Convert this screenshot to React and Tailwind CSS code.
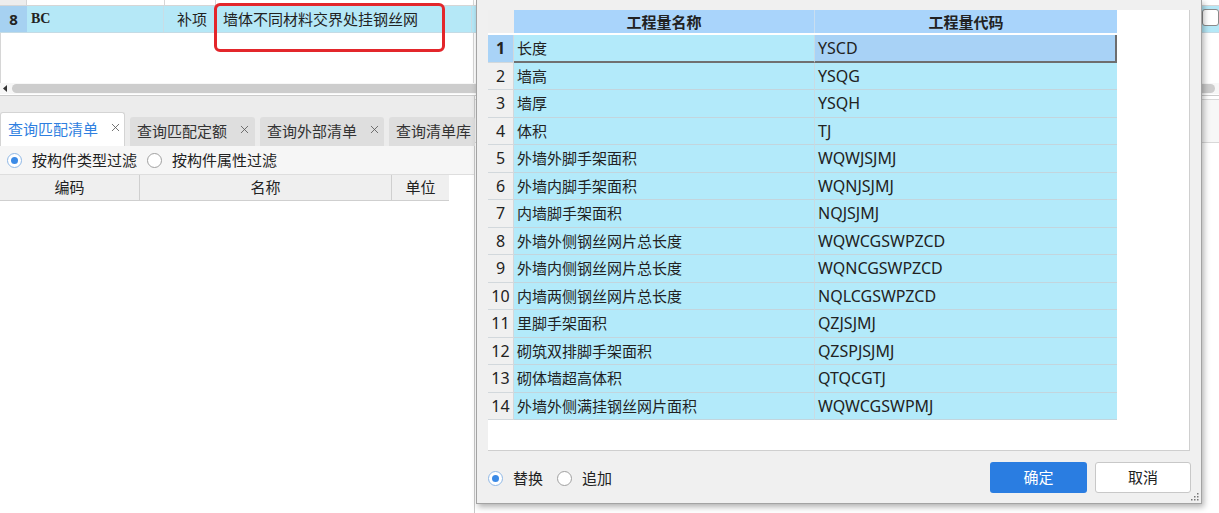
import { X } from 'lucide-react';

const rows = [
  ['长度', 'YSCD'],
  ['墙高', 'YSQG'],
  ['墙厚', 'YSQH'],
  ['体积', 'TJ'],
  ['外墙外脚手架面积', 'WQWJSJMJ'],
  ['外墙内脚手架面积', 'WQNJSJMJ'],
  ['内墙脚手架面积', 'NQJSJMJ'],
  ['外墙外侧钢丝网片总长度', 'WQWCGSWPZCD'],
  ['外墙内侧钢丝网片总长度', 'WQNCGSWPZCD'],
  ['内墙两侧钢丝网片总长度', 'NQLCGSWPZCD'],
  ['里脚手架面积', 'QZJSJMJ'],
  ['砌筑双排脚手架面积', 'QZSPJSJMJ'],
  ['砌体墙超高体积', 'QTQCGTJ'],
  ['外墙外侧满挂钢丝网片面积', 'WQWCGSWPMJ'],
];

const Radio = ({ checked, label }) => (
  <label className="flex items-center gap-[10px]">
    <span
      className={`w-[15px] h-[15px] rounded-full bg-white flex items-center justify-center border ${
        checked ? 'border-[#8fb8e6]' : 'border-[#a0a0a0]'
      }`}
    >
      {checked && <span className="w-[7px] h-[7px] rounded-full bg-[#3b8ae6]" />}
    </span>
    <span>{label}</span>
  </label>
);

const Tab = ({ label, active, closable = true, width }) => (
  <div
    className={`flex items-center gap-[11px] px-[7px] rounded-t-[3px] ${width} ${
      active
        ? 'h-[34px] bg-white text-[#2f7fe0] border border-b-0 border-[#d4d4d4]'
        : 'h-[29px] bg-[#dedede] text-[#333]'
    }`}
  >
    <span className="whitespace-nowrap">{label}</span>
    {closable && <X size={13} strokeWidth={1.5} className="text-[#555] shrink-0 -mt-[4px]" />}
  </div>
);

export default function App() {
  return (
    <div className="relative w-[1219px] h-[513px] overflow-hidden bg-white text-[15px] text-[#222] font-['Noto_Sans','Noto_Sans_CJK_SC',sans-serif]">
      <div className="flex flex-col h-full">
        {/* upper grid */}
        <div className="h-[96px] flex flex-col border-b border-[#cccccc]">
          <div className="h-[6px] flex border-b border-[#d6d6d6]">
            <div className="w-[27px] bg-[#ededed] border-r border-[#d6d6d6]" />
            <div className="w-[138px] border-r border-[#d6d6d6]" />
            <div className="w-[51px] border-r border-[#d6d6d6]" />
            <div className="w-[258px] border-r border-[#d6d6d6]" />
            <div className="flex-1" />
          </div>
          <div className="h-[27px] flex bg-[#b5e8f7] border-b border-[#c4dbe5] leading-[26px]">
            <div className="w-[27px] bg-[#a6d1f1] text-center font-bold">8</div>
            <div className="w-[138px] border-r border-[#c9dde6] pl-[4px] font-['Liberation_Serif',serif] text-[14px] font-semibold">BC</div>
            <div className="w-[51px] border-r border-[#c9dde6] text-right pr-[7px]">补项</div>
            <div className="w-[258px] border-r border-[#c9dde6] pl-[8px] whitespace-nowrap">墙体不同材料交界处挂钢丝网</div>
            <div className="flex-1 pl-[730px] pt-[3px]">
              <div className="w-[17px] h-[17px] bg-white border border-[#8a8a8a] rounded-[3px]" />
            </div>
          </div>
          <div className="flex-1 flex">
            <div className="w-[474px] border-r border-l border-[#d6d6d6]" />
          </div>
          <div className="h-[11px] flex items-center bg-[#f7f7f7] mb-[1px]">
            <svg width="12" height="11" viewBox="0 0 12 11" className="shrink-0">
              <path d="M3 5.5 L7 2 L7 9 Z" fill="#333" />
            </svg>
            <div className="h-[9px] w-[1203px] bg-[#cdcdcd] rounded-full" />
          </div>
        </div>

        {/* lower panels */}
        <div className="flex-1 flex">
          <div className="w-[475px] border-r border-[#c8c8c8] flex flex-col">
            <div className="h-[50px] bg-[#ececec] flex items-end gap-[5px]">
              <Tab label="查询匹配清单" active width="w-[125px]" />
              <Tab label="查询匹配定额" width="w-[125px]" />
              <Tab label="查询外部清单" width="w-[124px]" />
              <Tab label="查询清单库" closable={false} width="w-[86px]" />
            </div>
            <div className="h-[29px] bg-[#f6f6f6] flex items-center pl-[7px] gap-[10px] border-b border-[#dedede]">
              <Radio checked label="按构件类型过滤" />
              <Radio label="按构件属性过滤" />
            </div>
            <div className="h-[26px] flex">
              <div className="w-[449px] flex bg-[#efefef] border-b border-[#cfcfcf] leading-[25px]">
                <div className="w-[140px] text-center border-r border-[#cfcfcf]">编码</div>
                <div className="w-[252px] text-center border-r border-[#cfcfcf]">名称</div>
                <div className="w-[57px] text-center">单位</div>
              </div>
            </div>
            <div className="flex-1 bg-white" />
          </div>
          <div className="flex-1 flex flex-col">
            <div className="h-[4px] border-b border-[#d8d8d8]" />
            <div className="h-[43px] bg-[#f7f7f7] border-b border-[#d8d8d8]" />
            <div className="flex-1 bg-white" />
          </div>
        </div>
      </div>

      {/* red annotation box */}
      <div className="absolute left-[214px] top-[3px] w-[231px] h-[49px] border-[3px] border-[#e3262b] rounded-[6px]" />

      {/* dialog */}
      <div className="absolute left-[476px] top-0 w-[726px] h-[504px] bg-[#f0f0f0] border border-t-0 border-[#a3a3a3] shadow-[2px_3px_6px_rgba(0,0,0,0.3)] flex flex-col px-[11px] pt-[10px]">
        <div className="h-[441px] bg-white border border-[#cfcfcf] border-l-0 border-t-0">
          <div className="flex h-[25px] border-b-2 border-white font-bold leading-[24px]">
            <div className="w-[26px] bg-[#efefef]" />
            <div className="w-[301px] bg-[#a9d4fb] text-center border-r border-[#c9def0]">工程量名称</div>
            <div className="w-[302px] bg-[#a9d4fb] text-center">工程量代码</div>
          </div>
          {rows.map(([name, code], i) => {
            const sel = i === 0;
            return (
              <div key={code} className="flex h-[27.5px] leading-[26px]">
                <div
                  className={`w-[26px] text-center text-[16px] border-b border-r border-[#d2d8dc] ${
                    sel ? 'bg-[#a9d3f7] font-bold' : 'bg-[#f0f0f0]'
                  }`}
                >
                  {i + 1}
                </div>
                <div
                  className={`w-[301px] pl-[3px] bg-[#b3eafa] border-r border-[#c9dbe3] whitespace-nowrap ${
                    sel ? 'border-b-2 border-b-[#707070]' : 'border-b border-b-[#c3d5dd]'
                  }`}
                >
                  {name}
                </div>
                <div
                  className={`w-[302px] pl-[3px] text-[16px] ${
                    sel
                      ? 'bg-[#a8d2f6] border-b-2 border-r-2 border-[#6e6e6e]'
                      : 'bg-[#b3eafa] border-b border-[#c3d5dd]'
                  }`}
                >
                  {code}
                </div>
              </div>
            );
          })}
        </div>
        <div className="flex-1 flex items-center justify-between relative">
          <div className="flex items-center gap-[14px] pt-[3px]">
            <Radio checked label="替换" />
            <Radio label="追加" />
          </div>
          <div className="flex items-center gap-[8px] -mr-[1px]">
            <button className="w-[97px] h-[31px] bg-[#2a7de1] text-white rounded-[3px]">确定</button>
            <button className="w-[96px] h-[31px] bg-white border border-[#c8c8c8] rounded-[3px] text-[#222]">取消</button>
          </div>
          <svg width="8" height="8" viewBox="0 0 8 8" className="absolute right-[-9px] bottom-[2px]">
            <rect x="6" y="0" width="1.5" height="1.5" fill="#777" />
            <rect x="3" y="3" width="1.5" height="1.5" fill="#777" />
            <rect x="6" y="3" width="1.5" height="1.5" fill="#777" />
            <rect x="0" y="6" width="1.5" height="1.5" fill="#777" />
            <rect x="3" y="6" width="1.5" height="1.5" fill="#777" />
            <rect x="6" y="6" width="1.5" height="1.5" fill="#777" />
          </svg>
        </div>
      </div>
    </div>
  );
}
